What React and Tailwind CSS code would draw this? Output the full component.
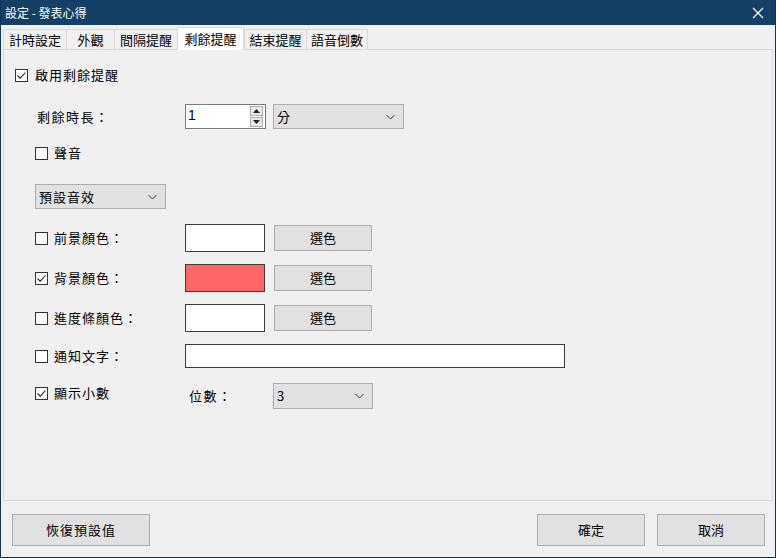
import React from 'react';

const font = { fontFamily: '"Noto Sans CJK TC", "Noto Sans", sans-serif' };

function Check({ checked }) {
  return (
    <span className="w-[13px] h-[13px] border border-[#333333] bg-white flex items-center justify-center shrink-0">
      {checked && (
        <svg width="11" height="11" viewBox="0 0 11 11">
          <path d="M1.5 5.5 L4.2 8.2 L9.5 2.5" fill="none" stroke="#222" strokeWidth="1.1" />
        </svg>
      )}
    </span>
  );
}

function Chevron() {
  return (
    <svg width="9" height="6" viewBox="0 0 9 6" className="shrink-0">
      <path d="M0.5 1 L4.5 5 L8.5 1" fill="none" stroke="#333" strokeWidth="1" />
    </svg>
  );
}

function Combo({ label, className }) {
  return (
    <div className={`flex items-center justify-between bg-[#E1E1E1] border border-[#ADADAD] pl-[3px] pr-[8px] text-[13px] ${className}`}>
      <span>{label}</span>
      <Chevron />
    </div>
  );
}

function Btn({ children, className }) {
  return (
    <div className={`flex items-center justify-center bg-[#E1E1E1] border border-[#ADADAD] text-[13px] ${className}`}>
      {children}
    </div>
  );
}

function ColorRow({ label, checked, color, className }) {
  return (
    <div className={`flex items-center h-[28px] ${className}`}>
      <div className="w-[150px] flex items-center gap-[6px]">
        <Check checked={checked} />
        <span className="tracking-[1px]">{label}</span>
      </div>
      <div className={`w-[80px] h-[28px] border border-[#3c3c3c] ${color}`} />
      <Btn className="ml-[9px] w-[98px] h-[26px]">選色</Btn>
    </div>
  );
}

export default function App() {
  const tabs = [
    { t: '計時設定', w: 'w-[63px]' },
    { t: '外觀', w: 'w-[48px]' },
    { t: '間隔提醒', w: 'w-[63px]' },
    { t: '剩餘提醒', w: 'w-[67px]', active: true },
    { t: '結束提醒', w: 'w-[62px]' },
    { t: '語音倒數', w: 'w-[62px]' },
  ];

  return (
    <div style={font} className="w-[776px] h-[558px] bg-[#F0F0F0] border-l border-r border-b border-[#0f3354] flex flex-col text-black text-[13px] overflow-hidden">
      {/* title bar */}
      <div className="h-[25px] bg-[#134064] flex items-center justify-between pl-[4px] pr-[11px] text-white text-[12px]">
        <span>設定 - 發表心得</span>
        <svg width="12" height="12" viewBox="0 0 12 12">
          <path d="M1 1 L11 11 M11 1 L1 11" stroke="#fff" strokeWidth="1.2" />
        </svg>
      </div>

      {/* tabs */}
      <div className="flex items-end h-[23px] ml-[2px] mt-[1px]">
        {tabs.map((tab) =>
          tab.active ? (
            <div key={tab.t} className={`${tab.w} h-[23px] -mb-px relative z-10 bg-white border border-b-0 border-[#D9D9D9] flex items-center justify-center`}>
              {tab.t}
            </div>
          ) : (
            <div key={tab.t} className={`${tab.w} h-[20px] bg-[#F0F0F0] border border-b-0 border-r-0 border-[#D9D9D9] flex items-center justify-center last:border-r`}>
              {tab.t}
            </div>
          )
        )}
      </div>

      {/* panel */}
      <div className="ml-[2px] mr-[2px] h-[452px] border border-[#D9D9D9] flex flex-col pl-[11px]">
        <div className="flex items-center gap-[7px] h-[20px] mt-[15px]">
          <Check checked />
          <span className="tracking-[1px]">啟用剩餘提醒</span>
        </div>

        <div className="pl-[20px] flex flex-col">
          <div className="flex items-center h-[25px] mt-[19px]">
            <span className="w-[150px] pl-[2px] tracking-[1.5px]">剩餘時長：</span>
            <div className="w-[81px] h-[25px] bg-white border border-[#7A7A7A] flex items-center justify-between pl-[2px] pr-[2px]">
              <span className="text-[14px] leading-none -mt-[4px]" style={{ fontFamily: '"Liberation Sans", sans-serif' }}>1</span>
              <div className="flex flex-col gap-px">
                <div className="w-[13px] h-[10px] bg-[#E9E9E9] border border-[#ADADAD] flex items-center justify-center">
                  <svg width="7" height="4" viewBox="0 0 7 4"><path d="M0 4 L3.5 0 L7 4 Z" fill="#222" /></svg>
                </div>
                <div className="w-[13px] h-[10px] bg-[#E9E9E9] border border-[#ADADAD] flex items-center justify-center">
                  <svg width="7" height="4" viewBox="0 0 7 4"><path d="M0 0 L3.5 4 L7 0 Z" fill="#222" /></svg>
                </div>
              </div>
            </div>
            <Combo label="分" className="ml-[7px] w-[131px] h-[25px]" />
          </div>

          <div className="flex items-center gap-[6px] h-[20px] mt-[14px]">
            <Check />
            <span className="tracking-[1px]">聲音</span>
          </div>

          <Combo label="預設音效" className="mt-[21px] w-[131px] h-[25px] tracking-[1px]" />

          <ColorRow label="前景顏色：" color="bg-white" className="mt-[15px]" />
          <ColorRow label="背景顏色：" checked color="bg-[#FF6666]" className="mt-[12px]" />
          <ColorRow label="進度條顏色：" color="bg-white" className="mt-[12px]" />

          <div className="flex items-center h-[24px] mt-[12px]">
            <div className="w-[150px] flex items-center gap-[6px]">
              <Check />
              <span className="tracking-[1px]">通知文字：</span>
            </div>
            <div className="w-[380px] h-[24px] bg-white border border-[#3c3c3c]" />
          </div>

          <div className="flex items-center h-[26px] mt-[15px]">
            <div className="w-[150px] flex items-center gap-[6px] -mt-[6px]">
              <Check checked />
              <span className="tracking-[1px]">顯示小數</span>
            </div>
            <span className="w-[88px] pl-[4px] tracking-[1.5px]">位數：</span>
            <Combo label="3" className="w-[100px] h-[26px]" />
          </div>
        </div>
      </div>

      {/* bottom buttons */}
      <div className="flex items-center justify-between mt-[13px] ml-[11px] mr-[10px]">
        <Btn className="w-[138px] h-[32px] tracking-[1px]">恢復預設值</Btn>
        <div className="flex gap-[12px]">
          <Btn className="w-[108px] h-[32px]">確定</Btn>
          <Btn className="w-[108px] h-[32px]">取消</Btn>
        </div>
      </div>
    </div>
  );
}
